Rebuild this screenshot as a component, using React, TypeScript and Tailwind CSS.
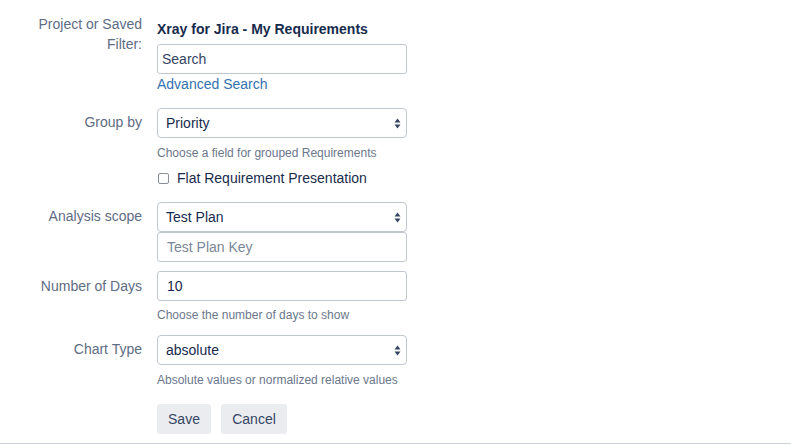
import React from "react";

const font = { fontFamily: '"Liberation Sans", Arial, Helvetica, sans-serif' };

function Arrows() {
  return (
    <svg width="7" height="11" viewBox="0 0 7 11" className="shrink-0">
      <path d="M3.5 0.5 L6.5 4.5 L0.5 4.5 Z" fill="#344563" />
      <path d="M3.5 10.5 L6.5 6.5 L0.5 6.5 Z" fill="#344563" />
    </svg>
  );
}

function SelectBox({ value, className = "" }: { value: string; className?: string }) {
  return (
    <div
      className={
        "flex h-[30px] w-[250px] items-center justify-between rounded-[4px] border border-[#c1c7d0] bg-white pl-[8px] pr-[5px] text-[14px] text-[#172b4d] " +
        className
      }
    >
      <span>{value}</span>
      <Arrows />
    </div>
  );
}

function TextBox({
  value,
  placeholder,
  pl = "pl-[8px]",
  className = "",
}: {
  value?: string;
  placeholder?: string;
  pl?: string;
  className?: string;
}) {
  return (
    <div
      className={
        "flex h-[30px] w-[250px] items-center rounded-[3px] border border-[#c1c7d0] bg-white text-[14px] " +
        pl +
        " " +
        className
      }
    >
      {value ? (
        <span className="text-[#172b4d]">{value}</span>
      ) : (
        <span className="text-[#7a869a]">{placeholder}</span>
      )}
    </div>
  );
}

function Label({ children, className = "" }: { children: React.ReactNode; className?: string }) {
  return (
    <div className={"w-[142px] shrink-0 text-right text-[14px] leading-[20px] text-[#5e6c84] " + className}>
      {children}
    </div>
  );
}

function Help({ children, className = "" }: { children: React.ReactNode; className?: string }) {
  return <div className={"text-[12px] leading-[16px] text-[#6b778c] " + className}>{children}</div>;
}

export default function App() {
  return (
    <div style={font} className="h-[444px] w-full border-b border-[#cdd1d9] bg-white pt-[14px]">
      {/* Row 1 */}
      <div className="flex gap-[15px]">
        <Label>
          Project or Saved
          <br />
          Filter:
        </Label>
        <div className="flex flex-col">
          <div className="mt-[5px] text-[14px] font-bold leading-[20px] text-[#172b4d]">
            Xray for Jira - My Requirements
          </div>
          <div className="mt-[5px] flex h-[30px] w-[250px] items-center rounded-[3px] border border-[#c1c7d0] bg-white pl-[4px] text-[14px] text-[#344563]">
            Search
          </div>
          <a className="text-[14px] leading-[20px] text-[#3572b0]">Advanced Search</a>
        </div>
      </div>

      {/* Row 2 */}
      <div className="mt-[14px] flex gap-[15px]">
        <Label className="pt-[4px]">Group by</Label>
        <div className="flex flex-col">
          <SelectBox value="Priority" />
          <Help className="mt-[7px]">Choose a field for grouped Requirements</Help>
          <div className="mt-[7px] flex h-[20px] items-center">
            <div className="ml-[1px] h-[11px] w-[11px] rounded-[2px] border border-[#8a8f99] bg-white" />
            <span className="ml-[8px] text-[14px] text-[#172b4d]">Flat Requirement Presentation</span>
          </div>
        </div>
      </div>

      {/* Row 3 */}
      <div className="mt-[14px] flex gap-[15px]">
        <Label className="pt-[4px]">Analysis scope</Label>
        <div className="flex flex-col">
          <SelectBox value="Test Plan" />
          <TextBox placeholder="Test Plan Key" pl="pl-[9px]" />
        </div>
      </div>

      {/* Row 4 */}
      <div className="mt-[9px] flex gap-[15px]">
        <Label className="pt-[5px]">Number of Days</Label>
        <div className="flex flex-col">
          <TextBox value="10" pl="pl-[9px]" />
          <Help className="mt-[6px]">Choose the number of days to show</Help>
        </div>
      </div>

      {/* Row 5 */}
      <div className="mt-[12px] flex gap-[15px]">
        <Label className="pt-[4px]">Chart Type</Label>
        <div className="flex flex-col">
          <SelectBox value="absolute" />
          <Help className="mt-[7px]">Absolute values or normalized relative values</Help>
        </div>
      </div>

      {/* Buttons */}
      <div className="mt-[16px] flex gap-[10px] pl-[157px]">
        <button className="h-[30px] w-[54px] rounded-[3px] bg-[#ebecf0] text-[14px] text-[#344563]">Save</button>
        <button className="h-[30px] w-[66px] rounded-[3px] bg-[#ebecf0] text-[14px] text-[#344563]">Cancel</button>
      </div>
    </div>
  );
}
